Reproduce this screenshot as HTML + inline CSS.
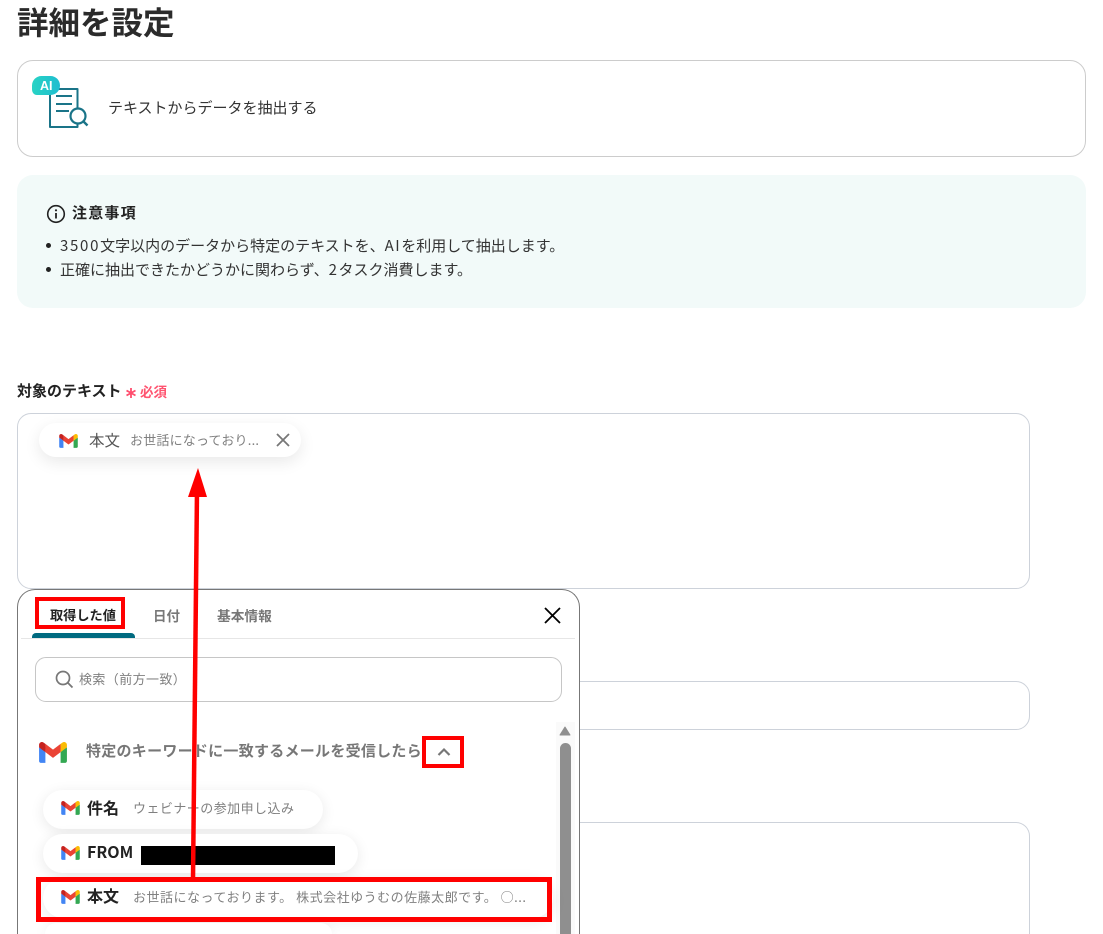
<!DOCTYPE html>
<html lang="ja">
<head>
<meta charset="utf-8">
<title>詳細を設定</title>
<style>
html,body{margin:0;padding:0;background:#fff;width:1103px;height:934px;overflow:hidden;}
#w{width:1103px;height:934px;position:relative;overflow:hidden;font-family:"Noto Sans CJK JP","Liberation Sans",sans-serif;color:#222;}
.a{position:absolute;box-sizing:border-box;}
.t{position:absolute;white-space:nowrap;line-height:20px;height:20px;}
.chip{position:absolute;box-sizing:border-box;background:#fff;border-radius:20px;box-shadow:0 3px 14px rgba(0,0,0,.09);}
.red{position:absolute;box-sizing:border-box;border:4px solid #f00;}
.lb{font-size:16px;font-weight:700;color:#222;}
.val{font-size:13px;color:#808080;}
</style>
</head>
<body>
<div id="w">
<svg width="0" height="0" style="position:absolute">
<defs>
<symbol id="gm" viewBox="0 0 256 193">
<path fill="#4285F4" d="M58.182 192.05V93.14L27.507 65.077 0 49.504v125.091c0 9.658 7.825 17.455 17.455 17.455h40.727Z"/>
<path fill="#34A853" d="M197.818 192.05h40.727c9.659 0 17.455-7.826 17.455-17.455V49.505l-31.156 17.837-27.026 25.798v98.91Z"/>
<path fill="#EA4335" d="M58.182 93.14l-4.174-38.647 4.174-36.989L128 69.868l69.818-52.364 4.669 34.992-4.669 40.644L128 145.504z"/>
<path fill="#FBBC04" d="M197.818 17.504V93.14L256 49.504V26.231c0-21.585-24.64-33.89-41.89-20.945l-16.292 12.218Z"/>
<path fill="#C5221F" d="M0 49.504l26.759 20.07L58.182 93.14V17.504L41.89 5.286C24.61-7.66 0 4.646 0 26.23v23.273Z"/>
</symbol>
<linearGradient id="aig" x1="0" y1="0" x2="1" y2="0"><stop offset="0" stop-color="#28d3c4"/><stop offset="1" stop-color="#1ebdd0"/></linearGradient>
</defs>
</svg>

<div class="t" style="left:17px;top:3px;font-size:31.500px;line-height:36px;height:36px;font-weight:700;color:#2b2b2b;">詳細を設定</div>

<div class="a" style="left:17px;top:60px;width:1069px;height:97px;border:1px solid #ccc;border-radius:16px;"></div>
<svg class="a" style="left:25px;top:70px" width="70" height="65" viewBox="0 0 70 65" fill="none">
<path d="M25 19H52.500V57H25Z" stroke="#1a7488" stroke-width="2" stroke-linejoin="round"/>
<path d="M31 26H47M31 34H47M31 41H44" stroke="#1a7488" stroke-width="2"/>
<circle cx="53" cy="46" r="7.500" fill="#fff" stroke="#1a7488" stroke-width="2.200"/>
<path d="M58.500 51.500L62.500 55.500" stroke="#1a7488" stroke-width="2.400"/>
<path d="M16.500 6H25.500A9.500 9.500 0 0 1 25.500 25H12C8.500 25 7 22 7 19V15.500A9.500 9.500 0 0 1 16.500 6Z" fill="url(#aig)"/>
<text x="15" y="20" font-family="Liberation Sans,sans-serif" font-size="12.500" font-weight="700" fill="#fff">AI</text>
</svg>
<div class="t" style="left:108px;top:98px;font-size:15px;color:#333;">テキストからデータを抽出する</div>

<div class="a" style="left:17px;top:175px;width:1069px;height:133px;background:#f2faf9;border-radius:16px;"></div>
<svg class="a" style="left:46px;top:204px" width="20" height="20" viewBox="0 0 20 20" fill="none">
<circle cx="10" cy="10" r="8.300" stroke="#222" stroke-width="1.600"/>
<path d="M10 9V14.500" stroke="#222" stroke-width="1.800"/>
<circle cx="10" cy="6.300" r="1.100" fill="#222"/>
</svg>
<div class="t" style="left:72px;top:203px;font-size:15px;font-weight:700;letter-spacing:1.200px;color:#222;">注意事項</div>
<div class="a" style="left:46px;top:243px;width:5px;height:5px;border-radius:50%;background:#222;"></div>
<div class="a" style="left:46px;top:267px;width:5px;height:5px;border-radius:50%;background:#222;"></div>
<div class="t" style="left:60px;top:236px;font-size:15px;color:#333;"><span style="letter-spacing:1.700px">3500</span>文字以内のデータから特定のテキストを、<span style="letter-spacing:1.500px">AI</span>を利用して抽出します。</div>
<div class="t" style="left:60px;top:260px;font-size:15px;color:#333;">正確に抽出できたかどうかに関わらず、<span style="letter-spacing:1.500px">2</span>タスク消費します。</div>

<div class="t" style="left:17px;top:381px;font-size:15px;font-weight:700;color:#222;">対象のテキスト</div>
<svg class="a" style="left:125px;top:387px" width="12" height="12" viewBox="0 0 12 12"><path d="M6 1V11M1.500 3.500L10.500 8.500M10.500 3.500L1.500 8.500" stroke="#ff4d6d" stroke-width="1.800"/></svg>
<div class="t" style="left:140px;top:381px;font-size:13.500px;font-weight:700;color:#ff5470;">必須</div>

<div class="a" style="left:17px;top:413px;width:1013px;height:176px;border:1px solid #cdd2da;border-radius:14px;"></div>
<div class="a" style="left:17px;top:681px;width:1013px;height:49px;border:1px solid #cdd2da;border-radius:14px;"></div>
<div class="a" style="left:17px;top:822px;width:1013px;height:112px;border:1px solid #cdd2da;border-bottom:none;border-radius:14px 14px 0 0;"></div>

<div class="chip" style="left:39px;top:423px;width:262px;height:34px;border-radius:17px;box-shadow:0 5px 16px rgba(0,0,0,.09);"></div>
<svg class="a" style="left:59px;top:434px" width="19" height="14"><use href="#gm"/></svg>
<div class="t" style="left:89px;top:430px;font-size:15.500px;color:#555;">本文</div>
<div class="t val" style="left:130px;top:430px;letter-spacing:.2px;">お世話になっており...</div>
<svg class="a" style="left:276px;top:433px" width="14" height="14" viewBox="0 0 14 14"><path d="M1 1L13 13M13 1L1 13" stroke="#777" stroke-width="1.800"/></svg>

<div class="a" style="left:17px;top:589px;width:563px;height:345px;background:#fff;border:1px solid #777;border-bottom:none;border-radius:18px 18px 0 0;overflow:hidden;"></div>
<div class="t" style="left:50px;top:605px;font-size:13.200px;font-weight:700;color:#222;">取得した値</div>
<div class="t" style="left:153px;top:605px;font-size:13.500px;font-weight:700;color:#777;">日付</div>
<div class="t" style="left:217px;top:605px;font-size:13.700px;font-weight:700;color:#777;">基本情報</div>
<div class="a" style="left:32px;top:633px;width:103px;height:5px;background:#006a80;border-radius:4px 4px 0 0;"></div>
<div class="a" style="left:21px;top:638px;width:554px;height:1px;background:#e6e6e6;"></div>
<svg class="a" style="left:544px;top:607px" width="17" height="17" viewBox="0 0 17 17"><path d="M1 1L16 16M16 1L1 16" stroke="#000" stroke-width="1.800"/></svg>

<div class="a" style="left:35px;top:657px;width:527px;height:45px;border:1px solid #c6c6c6;border-radius:11px;"></div>
<svg class="a" style="left:55px;top:670px" width="19" height="19" viewBox="0 0 19 19" fill="none"><circle cx="8" cy="8" r="6.500" stroke="#777" stroke-width="1.700"/><path d="M12.800 12.800L17.500 17.500" stroke="#777" stroke-width="1.800"/></svg>
<div class="t val" style="left:79px;top:669px;letter-spacing:.4px;">検索（前方一致）</div>

<svg class="a" style="left:39px;top:742px" width="28" height="21"><use href="#gm"/></svg>
<div class="t" style="left:86px;top:741px;font-size:15px;font-weight:700;color:#777;letter-spacing:.27px;">特定のキーワードに一致するメールを受信したら</div>
<svg class="a" style="left:437px;top:747px" width="14" height="10" viewBox="0 0 14 10" fill="none"><path d="M1.500 8L7 2.500L12.500 8" stroke="#777" stroke-width="2.200"/></svg>

<div class="a" style="left:556px;top:722px;width:19px;height:212px;background:#fafafa;"></div>
<svg class="a" style="left:559px;top:726px" width="12" height="10" viewBox="0 0 12 10"><path d="M6 1L11 9H1Z" fill="#8f8f8f" stroke="#8f8f8f" stroke-linejoin="round"/></svg>
<div class="a" style="left:560px;top:743px;width:11px;height:191px;background:#8f8f8f;border-radius:6px 6px 0 0;"></div>

<div class="chip" style="left:43px;top:790px;width:280px;height:39px;"></div>
<svg class="a" style="left:61px;top:801px" width="19" height="14"><use href="#gm"/></svg>
<div class="t lb" style="left:87px;top:797px;">件名</div>
<div class="t val" style="left:133px;top:798px;letter-spacing:.45px;">ウェビナーの参加申し込み</div>

<div class="chip" style="left:43px;top:834px;width:315px;height:39px;"></div>
<svg class="a" style="left:61px;top:846px" width="19" height="14"><use href="#gm"/></svg>
<div class="t lb" style="left:87px;top:841px;">FROM</div>
<div class="a" style="left:141px;top:846px;width:194px;height:19px;background:#000;"></div>

<div class="chip" style="left:43px;top:878px;width:510px;height:40px;"></div>
<svg class="a" style="left:61px;top:890px" width="19" height="14"><use href="#gm"/></svg>
<div class="t lb" style="left:87px;top:885px;">本文</div>
<div class="t val" style="left:133px;top:887px;letter-spacing:.5px;">お世話になっております。 株式会社ゆうむの佐藤太郎です。 ○...</div>

<div class="chip" style="left:45px;top:923px;width:287px;height:11px;border-radius:20px 20px 0 0;"></div>

<div class="red" style="left:35px;top:597px;width:90px;height:32px;"></div>
<div class="red" style="left:422px;top:736px;width:42px;height:32px;"></div>
<div class="red" style="left:36px;top:877px;width:516px;height:45px;border-width:5px;"></div>

<svg class="a" style="left:0;top:0;pointer-events:none" width="1103" height="934">
<path d="M197 490L193 879" stroke="#f00" stroke-width="4.500" fill="none"/>
<path d="M198 468L207 497H188Z" fill="#f00"/>
</svg>
</div>
</body>
</html>
